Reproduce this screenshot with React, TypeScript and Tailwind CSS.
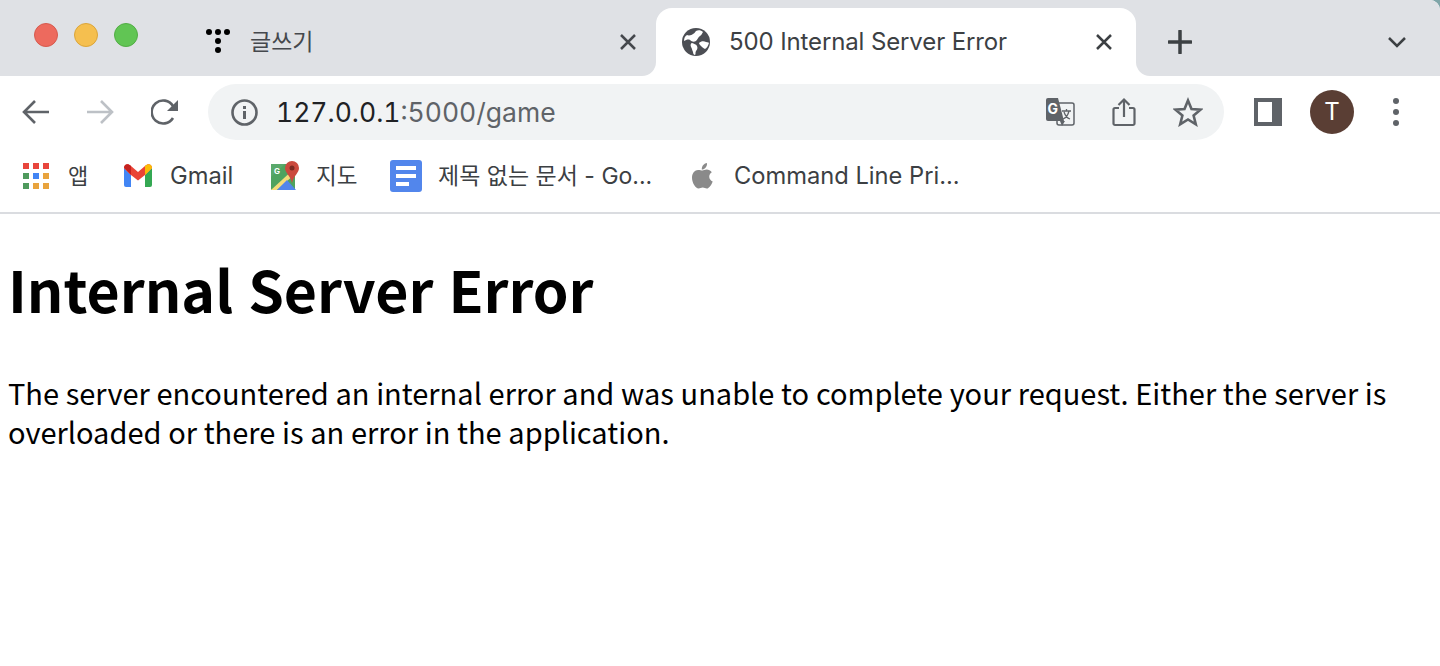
import { ReactNode } from "react";

const ui = "font-['Inter','Noto_Sans_CJK_KR',sans-serif]";

function Bookmark({ icon, label, className, textClass }: { icon: ReactNode; label: string; className: string; textClass: string }) {
  return (
    <div className={`flex items-center ${className}`}>
      {icon}
      <span className={`leading-[30px] whitespace-nowrap text-[#3c4043] ${textClass}`}>{label}</span>
    </div>
  );
}

function AppsIcon() {
  const colors = ["#e8453c", "#e8453c", "#e8453c", "#4f9a5d", "#4285f4", "#e8a33d", "#4f9a5d", "#e8a33d", "#e8a33d"];
  return (
    <div className="grid grid-cols-3 gap-[4px] w-[26px] shrink-0">
      {colors.map((c, i) => (
        <div key={i} className="w-[6px] h-[6px]" style={{ backgroundColor: c }} />
      ))}
    </div>
  );
}

function GmailIcon() {
  return (
    <svg width="30" height="26" viewBox="0 0 30 26" className="shrink-0">
      <path d="M1 5v17a2 2 0 0 0 2 2h5V12z" fill="#4285f4" />
      <path d="M29 5v17a2 2 0 0 1-2 2h-5V12z" fill="#34a853" />
      <path d="M1 5c0-4 4-5 7-2l7 6 7-6c3-3 7-2 7 2l-7 7-7 5.500L8 12z" fill="#ea4335" />
      <path d="M1 5c0-4 4-5 7-2v9z" fill="#c5221f" />
      <path d="M29 5c0-4-4-5-7-2v9z" fill="#fbbc04" />
    </svg>
  );
}

function MapsIcon() {
  return (
    <svg width="30" height="30" viewBox="0 0 30 30" className="shrink-0">
      <rect x="1" y="3" width="24" height="26" rx="1" fill="#4fa35f" />
      <path d="M1 29 25 7v6L7 29z" fill="#f4dc7a" />
      <path d="M7 29 17 19l9 10z" fill="#5286ec" />
      <path d="M1 3h14L1 16z" fill="#5aa96b" />
      <path d="M22 0a7 7 0 0 0-7 7c0 5 5 7 7 15 2-8 7-10 7-15a7 7 0 0 0-7-7z" fill="#cb4a3e" />
      <circle cx="22" cy="7" r="2.500" fill="#7c2a22" />
      <text x="4" y="13" fontSize="8" fontWeight="700" fill="#fff" fontFamily="Inter">G</text>
    </svg>
  );
}

function DocsIcon() {
  return (
    <svg width="32" height="32" viewBox="0 0 32 32" className="shrink-0">
      <rect width="32" height="32" rx="3" fill="#5286ec" />
      <rect x="6" y="6" width="20" height="4" fill="#fff" />
      <rect x="6" y="14" width="20" height="4" fill="#fff" />
      <rect x="6" y="22" width="13" height="4" fill="#fff" />
    </svg>
  );
}

function AppleIcon() {
  return (
    <svg width="22" height="26" viewBox="0 0 22 26" className="shrink-0">
      <path
        d="M15 0c.2 2-.5 3.500-1.500 4.700-1 1.200-2.300 1.900-3.700 1.800-.2-1.800.6-3.500 1.500-4.500C12.300.9 13.800.1 15 0zM10.500 7.500c1 0 2.300-1 4.300-1 1.700 0 3.700.8 5 2.700-3.800 2.300-3.200 7.500.9 9.200-.9 2.700-3.500 7.100-5.900 7.100-1.500 0-2.300-1-4-1-1.800 0-2.800 1-4.200 1C3.700 25.500 0 20 0 14.800 0 10 3 7 6 7c1.900 0 3.400.5 4.500.5z"
        fill="#8a8a8a"
      />
    </svg>
  );
}

function TypoIcon() {
  return (
    <svg width="26" height="26" viewBox="0 0 26 26" className="shrink-0">
      <circle cx="4" cy="3" r="3" fill="#000" />
      <circle cx="13" cy="3" r="3" fill="#000" />
      <circle cx="22" cy="3" r="3" fill="#000" />
      <circle cx="13" cy="12" r="3" fill="#000" />
      <circle cx="13" cy="21" r="3" fill="#000" />
    </svg>
  );
}

function GlobeIcon() {
  return (
    <svg width="28" height="28" viewBox="0 0 28 28" className="shrink-0">
      <circle cx="14" cy="14" r="14" fill="#4c4e54" />
      <path
        d="M14 3c2-1 5-1 7 1-1 1-1 3-3 4-2 1-2 3-4 5-2 1-4 1-6-1-2-1-4 0-6 1 0-3 1-5 3-6 2 1 5 0 6-1 2-1 2-2 3-3z"
        fill="#fff"
      />
      <path d="M10 15c2 1 4 1 5 3 1 2 0 4-1 5-1 2 0 3-1 4-1 0-2-1-2-3-1-2-1-4-2-5-1-2 0-4 1-4zM17 15c2-2 5-2 7-1 2 0 3 1 3 1-1 3-2 5-4 6-2-1-3-2-4-3-1-1-2-2-2-3z" fill="#fff" />
    </svg>
  );
}

function CloseIcon({ color }: { color: string }) {
  return (
    <svg width="16" height="16" viewBox="0 0 16 16" className="shrink-0">
      <path d="M1 1l14 14M15 1 1 15" stroke={color} strokeWidth="2.500" fill="none" />
    </svg>
  );
}

function TranslateIcon() {
  return (
    <svg width="29" height="30" viewBox="0 0 29 30" className="shrink-0">
      <rect x="11" y="6" width="17" height="22" rx="2" fill="#f1f3f4" stroke="#5f6368" strokeWidth="1.500" />
      <path d="M2 1h10l6 23H2a2 2 0 0 1-2-2V3a2 2 0 0 1 2-2z" fill="#5f6368" />
      <path d="M14 24l2 5 3-5z" fill="#5f6368" />
      <text x="1.500" y="17" fontSize="14" fontWeight="700" fill="#fff" fontFamily="Inter">G</text>
      <path d="M16 14h9M20.500 12v2M23 14c-1 4-3 7-6 8M18 15c1 3 3 6 6 7" stroke="#5f6368" strokeWidth="1.300" fill="none" />
    </svg>
  );
}

export default function App() {
  return (
    <div className="min-h-screen bg-white overflow-hidden">
      <div className={`${ui} border-b-2 border-[#dadce0]`}>
        {/* tab strip */}
        <div className="bg-[#7fa5a8]">
          <div className="h-[76px] bg-white rounded-tr-[10px] overflow-hidden flex items-stretch">
            <div className="flex items-stretch w-[656px] shrink-0 bg-[#dfe1e5] rounded-br-[14px]">
              <div className="flex items-center gap-[16px] pl-[34px] pb-[6px] w-[204px] shrink-0">
                <div className="w-6 h-6 rounded-full bg-[#ed6a5e] border border-[#d65a4e]" />
                <div className="w-6 h-6 rounded-full bg-[#f5bf4f] border border-[#dba53a]" />
                <div className="w-6 h-6 rounded-full bg-[#61c554] border border-[#52ad45]" />
              </div>
              <div className="flex items-center flex-1 pt-[8px] pl-[1px] pr-[20px]">
                <TypoIcon />
                <span className="ml-[19px] text-[23px] text-[#45484d] flex-1">글쓰기</span>
                <CloseIcon color="#45484d" />
              </div>
            </div>
            <div className="w-[480px] shrink-0 bg-[#dfe1e5]">
              <div className="mt-2 h-[68px] bg-white rounded-t-[16px] flex items-center pl-[26px] pr-[24px]">
                <GlobeIcon />
                <span className="ml-[19px] text-[24px] tracking-[-0.12px] text-[#3c4043] flex-1 whitespace-nowrap">500 Internal Server Error</span>
                <CloseIcon color="#3c4043" />
              </div>
            </div>
            <div className="flex-1 flex items-center justify-between pt-[8px] pl-[32px] pr-[33px] bg-[#dfe1e5] rounded-bl-[14px]">
              <svg width="24" height="24" viewBox="0 0 24 24">
                <path d="M12 1v22M1 12h22" stroke="#3c4043" strokeWidth="3.500" strokeLinecap="round" />
              </svg>
              <svg width="20" height="12" viewBox="0 0 20 12">
                <path d="M2 2l8 8 8-8" stroke="#3c4043" strokeWidth="2.500" fill="none" />
              </svg>
            </div>
          </div>
        </div>

        {/* toolbar */}
        <div className="h-[76px] flex items-center pb-[4px] bg-white">
          <div className="w-[208px] shrink-0 flex items-center pl-[22px]">
            <svg width="28" height="26" viewBox="0 0 28 26">
              <path d="M27 13H3M13 2 2 13l11 11" stroke="#5f6368" strokeWidth="2.600" fill="none" />
            </svg>
            <svg width="28" height="26" viewBox="0 0 28 26" className="ml-[36px]">
              <path d="M1 13h24M15 2l11 11-11 11" stroke="#bdc1c6" strokeWidth="2.600" fill="none" />
            </svg>
            <svg width="28" height="28" viewBox="0 0 28 28" className="ml-[37px]">
              <path d="M22 20a11.500 11.500 0 1 1 0-12" stroke="#5f6368" strokeWidth="2.600" fill="none" />
              <path d="M27 2v11H16z" fill="#5f6368" />
            </svg>
          </div>
          <div className="w-[1016px] h-[56px] shrink-0 rounded-full bg-[#f1f3f4] flex items-center pl-[23px] pr-[21px]">
            <svg width="27" height="27" viewBox="0 0 27 27" className="shrink-0">
              <circle cx="13.500" cy="13.500" r="12" stroke="#5f6368" strokeWidth="2.600" fill="none" />
              <rect x="12" y="12" width="3" height="8" fill="#5f6368" />
              <rect x="12" y="7" width="3" height="3" fill="#5f6368" />
            </svg>
            <span className="ml-[18px] text-[26.5px] leading-[34px] text-[#202124] flex-1 tabular-nums">
              127.0.0.1<span className="text-[#5f6368]">:5000/game</span>
            </span>
            <TranslateIcon />
            <svg width="26" height="30" viewBox="0 0 26 30" className="ml-[37px] shrink-0">
              <path d="M7 11H3a1.500 1.500 0 0 0-1.500 1.500v14A1.500 1.500 0 0 0 3 28h18a1.500 1.500 0 0 0 1.500-1.500v-14A1.500 1.500 0 0 0 21 11h-4" stroke="#5f6368" strokeWidth="2.200" fill="none" />
              <path d="M12 20V3M6.500 8 12 2.500 17.500 8" stroke="#5f6368" strokeWidth="2.200" fill="none" />
            </svg>
            <svg width="30" height="30" viewBox="0 0 30 30" className="ml-[35px] shrink-0">
              <path d="M15 3.500 18.500 12l9 .7-6.900 5.800 2.200 8.800L15 22.500l-7.800 4.800 2.200-8.800-6.900-5.800 9-.7z" stroke="#5f6368" strokeWidth="2.600" fill="none" strokeLinejoin="miter" />
            </svg>
          </div>
          <div className="flex-1 flex items-center pl-[30px]">
            <div className="w-[28px] h-[28px] bg-[#5f6368] flex items-center pl-[4px]">
              <div className="w-[14px] h-[20px] bg-white" />
            </div>
            <div className="ml-[28px] w-[44px] h-[44px] rounded-full bg-[#5a3e34] flex items-center justify-center text-white text-[24px]">T</div>
            <div className="ml-[39px] flex flex-col gap-[5px]">
              <div className="w-[6px] h-[6px] rounded-full bg-[#5f6368]" />
              <div className="w-[6px] h-[6px] rounded-full bg-[#5f6368]" />
              <div className="w-[6px] h-[6px] rounded-full bg-[#5f6368]" />
            </div>
          </div>
        </div>

        {/* bookmarks */}
        <div className="h-[60px] flex items-center pl-[23px] pb-[13px] bg-white">
          <Bookmark icon={<AppsIcon />} label="앱" textClass="text-[22px]" className="gap-[19px] w-[100px]" />
          <Bookmark icon={<GmailIcon />} label="Gmail" textClass="text-[23.7px]" className="gap-[17px] w-[147px]" />
          <Bookmark icon={<MapsIcon />} label="지도" textClass="text-[22.5px]" className="gap-[16px] w-[120px]" />
          <Bookmark icon={<DocsIcon />} label="제목 없는 문서 - Go..." textClass="text-[23px]" className="gap-[16px] w-[302px]" />
          <Bookmark icon={<AppleIcon />} label="Command Line Pri..." textClass="text-[23.7px]" className="gap-[20px]" />
        </div>
      </div>

      <div className="pl-2 pr-2 font-['Noto_Sans_CJK_KR','Noto_Sans',sans-serif] text-black">
        <h1 className="mt-[36px] text-[57.2px] leading-[76px] font-bold [word-spacing:2px]">Internal Server Error</h1>
        <p className="mt-[47px] text-[29px] leading-[39px] [word-spacing:0.2px]">
          The server encountered an internal error and was unable to complete your request. Either the server is overloaded or there is an error in the application.
        </p>
      </div>
    </div>
  );
}
